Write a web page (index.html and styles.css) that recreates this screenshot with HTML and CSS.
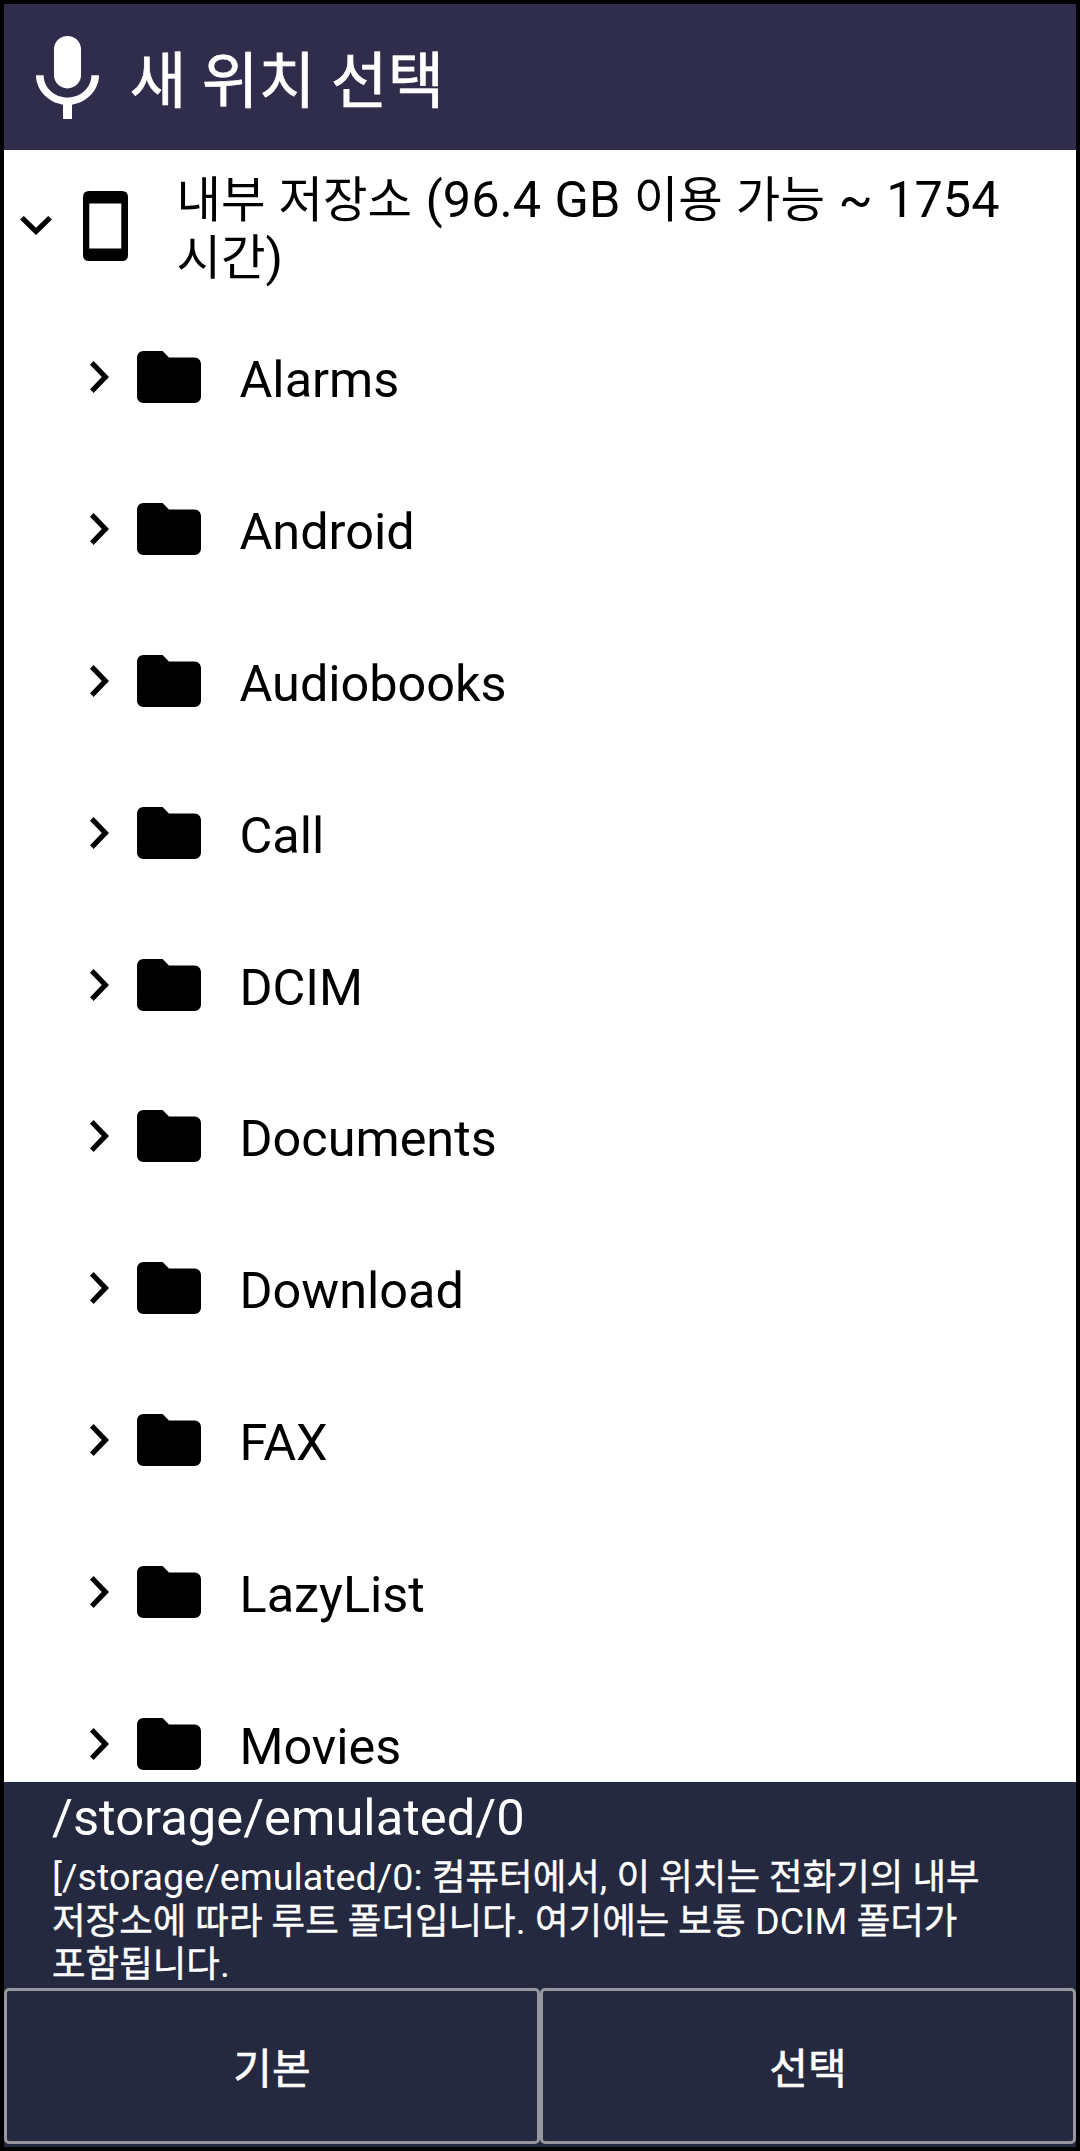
FILE: index.html
```html
<!DOCTYPE html>
<html lang="ko">
<head>
    <meta charset="UTF-8">
    <meta name="viewport" content="width=device-width, initial-scale=1.0">
    <title>새 위치 선택</title>
    <link rel="stylesheet" href="styles.css">
</head>
<body>
    <!-- shared icons -->
    <svg class="sprite" aria-hidden="true">
        <symbol id="chevron" viewBox="0 0 19 32" preserveAspectRatio="none">
            <path d="M3.6 0 L19 16 L3.6 32 L0 28.2 L11.8 16 L0 3.8 Z"/>
        </symbol>
        <symbol id="folder" viewBox="2 4 20 16" preserveAspectRatio="none">
            <path d="M10 4H4c-1.1 0-1.99.9-1.99 2L2 18c0 1.1.9 2 2 2h16c1.1 0 2-.9 2-2V8c0-1.1-.9-2-2-2h-8l-2-2z"/>
        </symbol>
    </svg>

    <div class="screen">
        <header class="header">
            <svg class="mic" viewBox="5 2 14 19" preserveAspectRatio="none">
                <path d="M12 14c1.66 0 3-1.34 3-3V5c0-1.66-1.34-3-3-3S9 3.34 9 5v6c0 1.66 1.34 3 3 3zm5.3-3c0 3-2.54 5.1-5.3 5.1S6.7 14 6.7 11H5c0 3.41 2.72 6.23 6 6.72V21h2v-3.28c3.28-.48 6-3.3 6-6.72h-1.7z"/>
            </svg>
            <h1>새 위치 선택</h1>
        </header>

        <main class="tree">
            <div class="root">
                <svg class="arrow-down" viewBox="0 0 32 19"><path d="M0 3.6 L16 19 L32 3.6 L28.2 0 L16 11.8 L3.8 0 Z"/></svg>
                <svg class="phone" viewBox="0 0 45 70"><path fill-rule="evenodd" d="M6 0H39Q45 0 45 6V64Q45 70 39 70H6Q0 70 0 64V6Q0 0 6 0ZM6.3 12.6V57.5H38.3V12.6Z"/></svg>
                <p class="root-name"><span class="ko">내부 저장소</span> (96.4 GB <span class="ko">이용 가능</span> ~ 1754<br><span class="ko">시간</span>)</p>
            </div>
            <ul class="folders">
                <li><svg class="arrow"><use href="#chevron"/></svg><svg class="folder"><use href="#folder"/></svg><span>Alarms</span></li>
                <li><svg class="arrow"><use href="#chevron"/></svg><svg class="folder"><use href="#folder"/></svg><span>Android</span></li>
                <li><svg class="arrow"><use href="#chevron"/></svg><svg class="folder"><use href="#folder"/></svg><span>Audiobooks</span></li>
                <li><svg class="arrow"><use href="#chevron"/></svg><svg class="folder"><use href="#folder"/></svg><span>Call</span></li>
                <li><svg class="arrow"><use href="#chevron"/></svg><svg class="folder"><use href="#folder"/></svg><span>DCIM</span></li>
                <li><svg class="arrow"><use href="#chevron"/></svg><svg class="folder"><use href="#folder"/></svg><span>Documents</span></li>
                <li><svg class="arrow"><use href="#chevron"/></svg><svg class="folder"><use href="#folder"/></svg><span>Download</span></li>
                <li><svg class="arrow"><use href="#chevron"/></svg><svg class="folder"><use href="#folder"/></svg><span>FAX</span></li>
                <li><svg class="arrow"><use href="#chevron"/></svg><svg class="folder"><use href="#folder"/></svg><span>LazyList</span></li>
                <li><svg class="arrow"><use href="#chevron"/></svg><svg class="folder"><use href="#folder"/></svg><span>Movies</span></li>
            </ul>
        </main>

        <footer class="footer">
            <div class="path">/storage/emulated/0</div>
            <p class="hint">[/storage/emulated/0: <span class="ko">컴퓨터에서</span>, <span class="ko">이 위치는 전화기의 내부</span><br><span class="ko">저장소에 따라 루트 폴더입니다</span>. <span class="ko">여기에는 보통</span> DCIM <span class="ko">폴더가</span><br><span class="ko">포함됩니다</span>.</p>
            <div class="buttons">
                <button type="button">기본</button>
                <button type="button">선택</button>
            </div>
        </footer>
    </div>
</body>
</html>
```
FILE: styles.css
```css
* {
    box-sizing: border-box;
}
body {
    margin: 0;
    background: #000;
    font-family: Roboto, "Noto Sans CJK KR", sans-serif;
}
h1, p, ul {
    margin: 0;
    padding: 0;
}
svg {
    display: block;
    flex: none;
}
.sprite {
    display: none;
}
.screen {
    height: 2151px;
    border: 4px solid #000;
    display: flex;
    flex-direction: column;
    overflow: hidden;
}

/* title bar */
.header {
    flex: none;
    height: 146px;
    padding: 0 0 0 31.5px;
    background: #2f2d4b;
    color: #fff;
    display: flex;
    align-items: center;
    gap: 31px;
}
.mic {
    width: 63px;
    height: 83px;
    fill: #fff;
}
.header h1 {
    padding-top: 9px;
    font-size: 61.8px;
    font-weight: 400;
    line-height: 80px;
    white-space: nowrap;
    -webkit-text-stroke: 0.7px #fff;
}

/* folder tree */
.tree {
    flex: 1;
    min-height: 0;
    overflow: hidden;
    background: #fff;
    color: #000;
    font-size: 50.4px;
}
.root {
    display: flex;
    align-items: center;
    height: 151px;
    padding-left: 16px;
}
.arrow-down {
    width: 32px;
    height: 19px;
}
.phone {
    width: 45px;
    height: 70px;
    margin-left: 31px;
}
.root-name {
    margin-left: 48.5px;
    padding-top: 6px;
    line-height: 58px;
    white-space: nowrap;
    word-spacing: 1px;
}
.root-name .ko {
    font-size: 48.4px;
    line-height: 1;
}
.folders {
    list-style: none;
}
.folders li {
    display: flex;
    align-items: center;
    height: 151.9px;
    padding-left: 86px;
}
.arrow {
    width: 19px;
    height: 32px;
}
.folder {
    width: 64px;
    height: 52px;
    margin-left: 28px;
}
.folders span {
    margin-left: 38.5px;
    padding-top: 6px;
    line-height: 60px;
}

/* selected path and actions */
.footer {
    flex: none;
    height: 365px;
    background: #24293f;
    color: #fff;
    display: flex;
    flex-direction: column;
}
.path {
    padding: 6px 0 0 48px;
    font-size: 50.7px;
    line-height: 60px;
}
.hint {
    padding: 8px 0 0 48px;
    font-size: 37.7px;
    line-height: 43.5px;
    white-space: nowrap;
}
.hint .ko {
    font-size: 36.5px;
    line-height: 1;
    -webkit-text-stroke: 0.4px #fff;
}
.buttons {
    display: flex;
    height: 156px;
    margin-top: auto;
    margin-bottom: 3px;
}
.buttons button {
    flex: 1;
    padding: 0 0 2px;
    background: none;
    border: 3px solid #97979f;
    border-radius: 5px;
    color: #fff;
    font-family: inherit;
    font-size: 42px;
    -webkit-text-stroke: 0.6px #fff;
}
```
